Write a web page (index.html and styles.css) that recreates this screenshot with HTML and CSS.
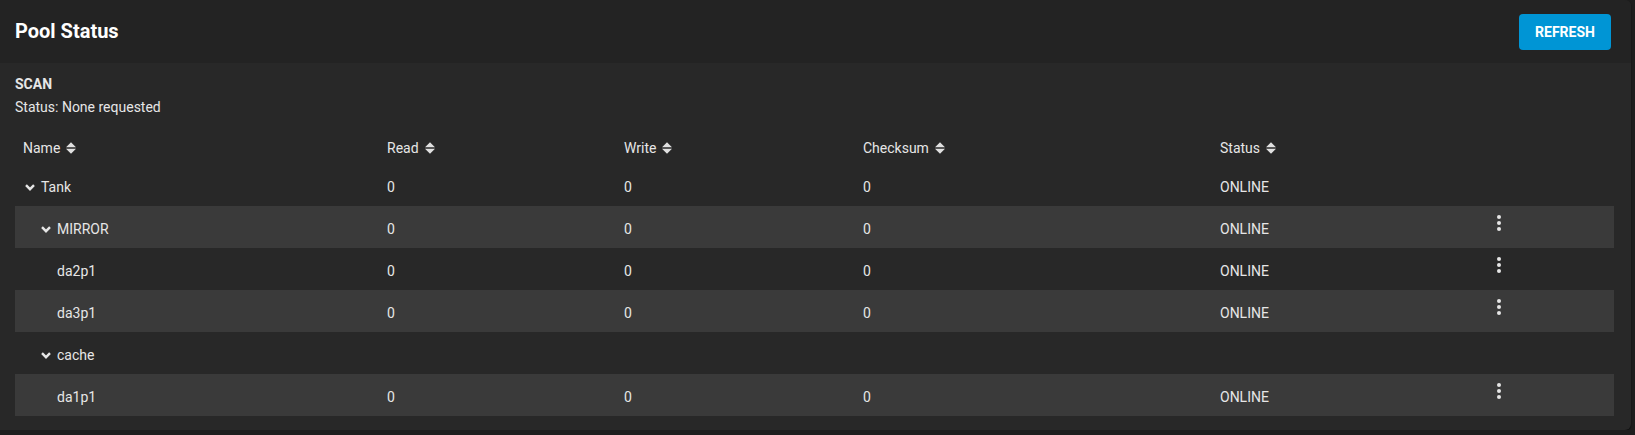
FILE: index.html
```html
<!DOCTYPE html>
<html>
<head>
<meta charset="utf-8">
<link rel="stylesheet" href="styles.css">
</head>
<body>
<div class="card">
  <div class="card-header">
    <h1 class="title">Pool Status</h1>
    <button class="btn-refresh">REFRESH</button>
  </div>
  <div class="card-body">
    <div class="scan-label">SCAN</div>
    <div class="scan-status">Status: None requested</div>
    <div class="table">
      <div class="row head">
        <div class="cell">Name <svg class="sort" viewBox="0 0 10 12"><path d="M5 0.3 L10 5.3 H0 Z M5 11.7 L10 6.7 H0 Z" fill="#e0e0e0"/></svg></div>
        <div class="cell">Read <svg class="sort" viewBox="0 0 10 12"><path d="M5 0.3 L10 5.3 H0 Z M5 11.7 L10 6.7 H0 Z" fill="#e0e0e0"/></svg></div>
        <div class="cell">Write <svg class="sort" viewBox="0 0 10 12"><path d="M5 0.3 L10 5.3 H0 Z M5 11.7 L10 6.7 H0 Z" fill="#e0e0e0"/></svg></div>
        <div class="cell">Checksum <svg class="sort" viewBox="0 0 10 12"><path d="M5 0.3 L10 5.3 H0 Z M5 11.7 L10 6.7 H0 Z" fill="#e0e0e0"/></svg></div>
        <div class="cell">Status <svg class="sort" viewBox="0 0 10 12"><path d="M5 0.3 L10 5.3 H0 Z M5 11.7 L10 6.7 H0 Z" fill="#e0e0e0"/></svg></div>
        <div class="cell"></div>
      </div>
      <div class="row">
        <div class="cell name lvl0"><svg class="chev" viewBox="0 0 10 7"><path d="M1 1.2 L5 5.2 L9 1.2" fill="none" stroke="#e6e6e6" stroke-width="2.4"/></svg>Tank</div>
        <div class="cell">0</div><div class="cell">0</div><div class="cell">0</div><div class="cell">ONLINE</div><div class="cell"></div>
      </div>
      <div class="row alt">
        <div class="cell name lvl1"><svg class="chev" viewBox="0 0 10 7"><path d="M1 1.2 L5 5.2 L9 1.2" fill="none" stroke="#e6e6e6" stroke-width="2.4"/></svg>MIRROR</div>
        <div class="cell">0</div><div class="cell">0</div><div class="cell">0</div><div class="cell">ONLINE</div>
        <div class="cell act"><span class="kebab"><i></i><i></i><i></i></span></div>
      </div>
      <div class="row">
        <div class="cell name lvl2">da2p1</div>
        <div class="cell">0</div><div class="cell">0</div><div class="cell">0</div><div class="cell">ONLINE</div>
        <div class="cell act"><span class="kebab"><i></i><i></i><i></i></span></div>
      </div>
      <div class="row alt">
        <div class="cell name lvl2">da3p1</div>
        <div class="cell">0</div><div class="cell">0</div><div class="cell">0</div><div class="cell">ONLINE</div>
        <div class="cell act"><span class="kebab"><i></i><i></i><i></i></span></div>
      </div>
      <div class="row">
        <div class="cell name lvl1"><svg class="chev" viewBox="0 0 10 7"><path d="M1 1.2 L5 5.2 L9 1.2" fill="none" stroke="#e6e6e6" stroke-width="2.4"/></svg>cache</div>
        <div class="cell"></div><div class="cell"></div><div class="cell"></div><div class="cell"></div><div class="cell"></div>
      </div>
      <div class="row alt">
        <div class="cell name lvl2">da1p1</div>
        <div class="cell">0</div><div class="cell">0</div><div class="cell">0</div><div class="cell">ONLINE</div>
        <div class="cell act"><span class="kebab"><i></i><i></i><i></i></span></div>
      </div>
    </div>
  </div>
</div>
</body>
</html>
```
FILE: styles.css
```css
html, body {
  margin: 0;
  padding: 0;
  background: #1e1e1e;
  font-family: Roboto, "Liberation Sans", sans-serif;
  color: #e6e6e6;
}
.card {
  width: 1631px;
  height: 430px;
  background: #282828;
  border-radius: 0 6px 6px 0;
  box-shadow: 0 1px 2px rgba(0,0,0,0.6);
  overflow: hidden;
}
.card-header {
  height: 63px;
  background: #232323;
  display: flex;
  align-items: center;
  justify-content: space-between;
  padding: 0 20px 0 15px;
}
.title {
  margin: 0;
  font-size: 20px;
  font-weight: 700;
  color: #ffffff;
  padding-bottom: 2px;
}
.btn-refresh {
  width: 92px;
  height: 36px;
  background: #0095d5;
  color: #ffffff;
  border: none;
  border-radius: 4px;
  font-family: Roboto, "Liberation Sans", sans-serif;
  font-size: 14px;
  font-weight: 700;
  padding: 0;
  margin-top: 1px;
}
.card-body {
  padding: 13px 17px 0 15px;
}
.scan-label {
  font-size: 14px;
  font-weight: 700;
  line-height: 16px;
  color: #e6e6e6;
}
.scan-status {
  margin-top: 7px;
  font-size: 14px;
  line-height: 16px;
}
.table {
  margin-top: 13px;
}
.row {
  display: grid;
  grid-template-columns: 364px 237px 239px 357px 285px 1fr;
  height: 42px;
  font-size: 14px;
}
.row.head {
  height: 36px;
}
.row.alt {
  background: #3a3a3a;
}
.cell {
  display: flex;
  align-items: center;
  padding: 4px 0 0 8px;
  white-space: nowrap;
}
.sort {
  width: 10px;
  height: 12px;
  margin-left: 6px;
}
.chev {
  width: 10px;
  height: 7px;
  margin-right: 6px;
}
.lvl0 { padding-left: 10px; }
.lvl1 { padding-left: 26px; }
.lvl2 { padding-left: 42px; }
.cell.act {
  padding: 9px 0 0 0;
  align-items: flex-start;
}
.kebab {
  display: flex;
  flex-direction: column;
  gap: 2px;
}
.kebab i {
  display: block;
  width: 4px;
  height: 4px;
  border-radius: 50%;
  background: #e6e6e6;
}
```
